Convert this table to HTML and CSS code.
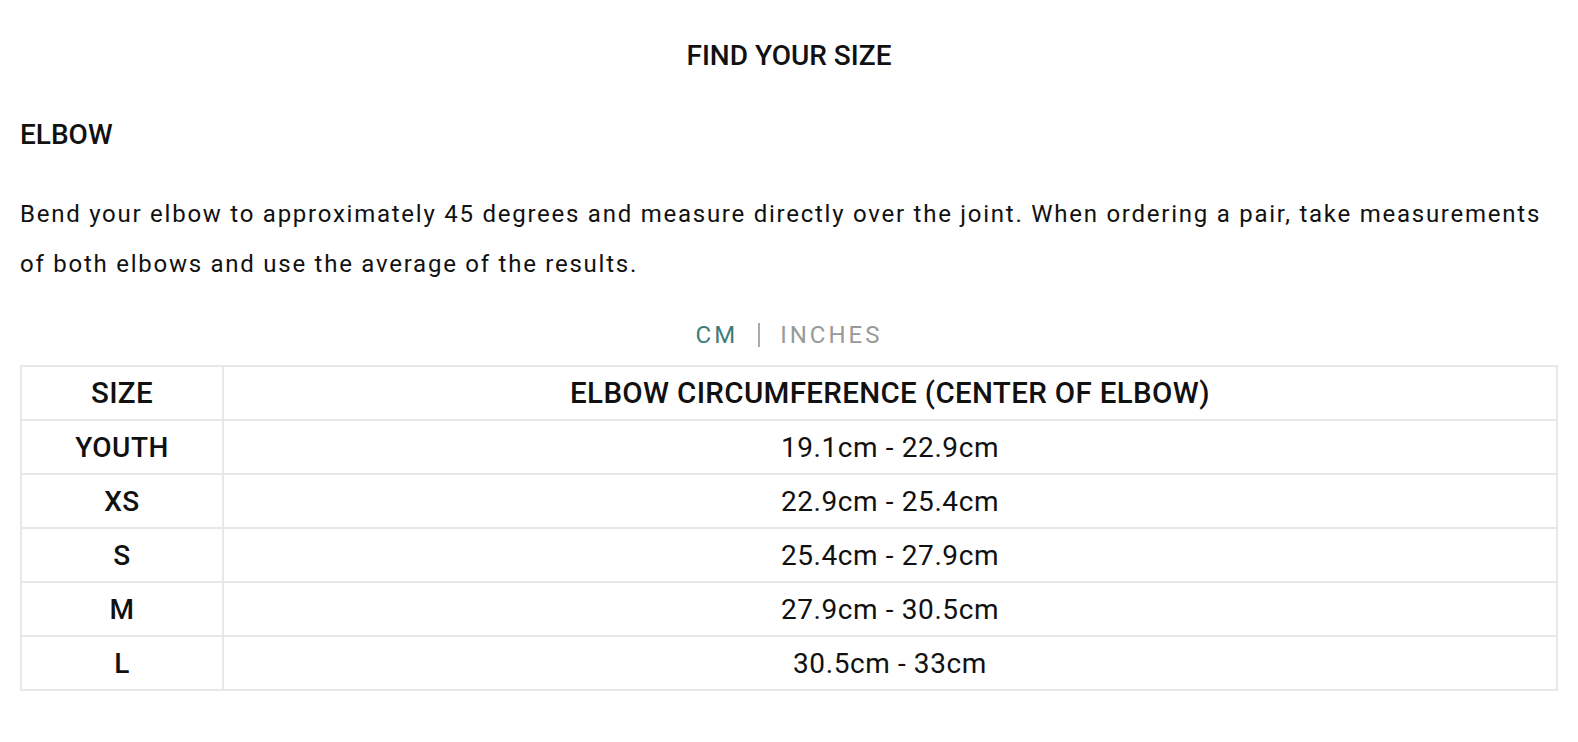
FILE: index.html
```html
<!DOCTYPE html>
<html lang="en">
<head>
<meta charset="utf-8">
<title>Find your size</title>
<link rel="stylesheet" href="styles.css">
</head>
<body>
<main class="page">
  <h1 class="title">FIND YOUR SIZE</h1>
  <h2 class="section">ELBOW</h2>
  <p class="desc">Bend your elbow to approximately 45 degrees and measure directly over the joint. When ordering a pair, take measurements of both elbows and use the average of the results.</p>
  <div class="units">
    <span class="unit active">CM</span>
    <span class="sep"></span>
    <span class="unit">INCHES</span>
  </div>
  <table class="sizes">
    <thead>
      <tr><th class="col-size">SIZE</th><th>ELBOW CIRCUMFERENCE (CENTER OF ELBOW)</th></tr>
    </thead>
    <tbody>
      <tr><td class="col-size">YOUTH</td><td>19.1cm - 22.9cm</td></tr>
      <tr><td class="col-size">XS</td><td>22.9cm - 25.4cm</td></tr>
      <tr><td class="col-size">S</td><td>25.4cm - 27.9cm</td></tr>
      <tr><td class="col-size">M</td><td>27.9cm - 30.5cm</td></tr>
      <tr><td class="col-size">L</td><td>30.5cm - 33cm</td></tr>
    </tbody>
  </table>
</main>
</body>
</html>
```
FILE: styles.css
```css
html, body {
  margin: 0;
  padding: 0;
  background: #fff;
}
body {
  font-family: Roboto, "Liberation Sans", sans-serif;
  color: #111;
}
.page {
  padding: 36px 20px 0;
}
.title {
  margin: 0;
  font-size: 28px;
  line-height: 40px;
  font-weight: 500;
  text-align: center;
}
.section {
  margin: 39px 0 0;
  font-size: 28px;
  line-height: 40px;
  font-weight: 500;
}
.desc {
  margin: 34px 0 0;
  font-size: 24px;
  line-height: 50px;
  font-weight: 400;
  letter-spacing: 1.75px;
}
.units {
  margin-top: 26px;
  height: 40px;
  display: flex;
  justify-content: center;
  align-items: center;
  gap: 20px;
  font-size: 24px;
  letter-spacing: 3px;
}
.unit { color: #999; }
.unit.active { color: #3e7d7b; }
.sep {
  width: 2px;
  height: 24px;
  background: #aaa;
}
.sizes {
  margin-top: 10px;
  width: 100%;
  border-collapse: collapse;
  border: 2px solid #e8e8e8;
}
.sizes th, .sizes td {
  border: 2px solid #e8e8e8;
  height: 52px;
  padding: 0;
  text-align: center;
}
.sizes th {
  font-size: 29.5px;
  font-weight: 500;
  letter-spacing: 0.35px;
}
.sizes td {
  font-size: 28px;
  font-weight: 400;
  letter-spacing: 0.6px;
}
.sizes td.col-size {
  font-weight: 500;
  letter-spacing: 0.5px;
}
.col-size {
  width: 200px;
}
```
